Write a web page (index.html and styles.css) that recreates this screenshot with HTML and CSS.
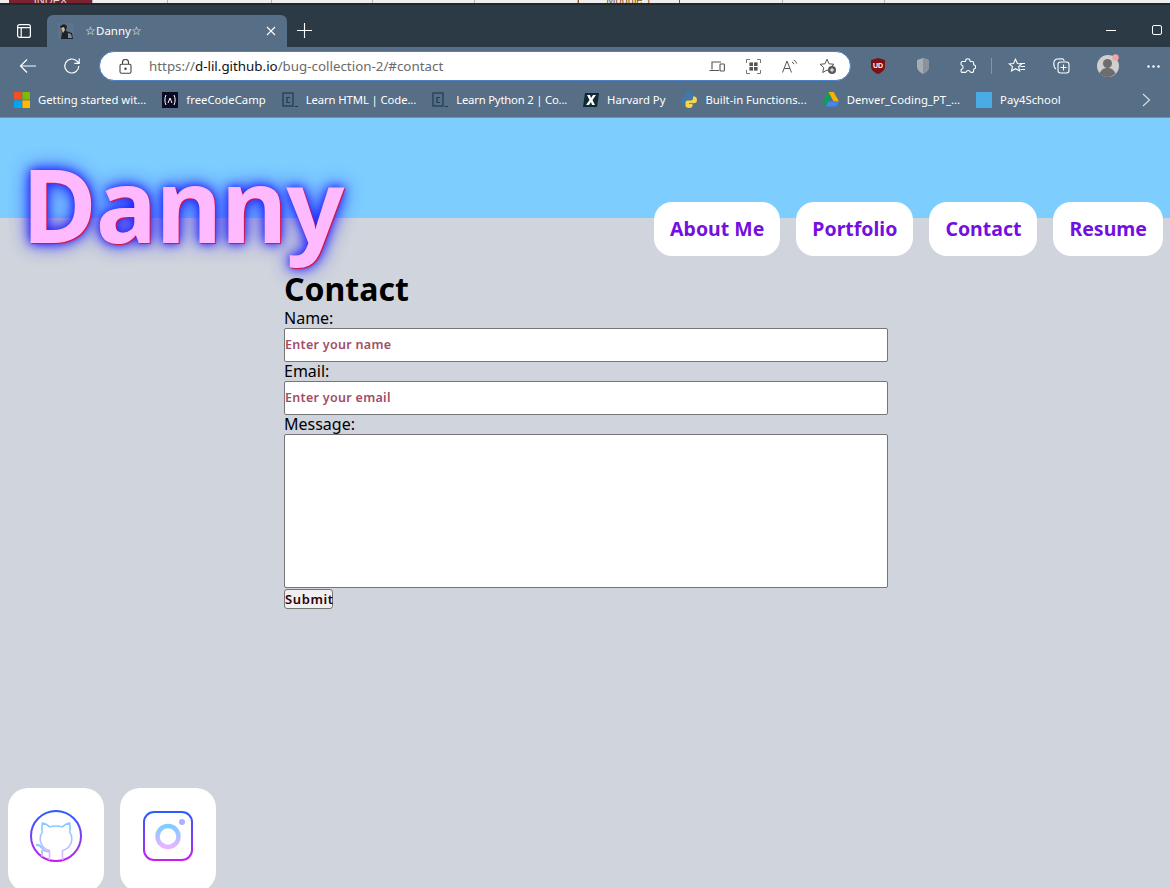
FILE: index.html
```html
<!DOCTYPE html>
<html lang="en">
<head>
  <meta charset="UTF-8">
  <title>☆Danny☆</title>
  <link rel="stylesheet" href="styles.css">
</head>
<body>

  <div class="behind">
    <span class="behind-cell behind-red">INDEX</span>
    <span class="behind-cell w-75"></span>
    <span class="behind-cell w-104"></span>
    <span class="behind-cell w-101"></span>
    <span class="behind-cell w-102"></span>
    <span class="behind-cell w-103"></span>
    <span class="behind-cell w-102 behind-mod">Module 1</span>
    <span class="behind-cell w-103"></span>
    <span class="behind-cell w-102"></span>
  </div>

  <div class="titlebar">
    <svg class="tab-actions" width="16" height="16" viewBox="0 0 16 16" fill="none" stroke="#fff" stroke-width="1.2"><rect x="1.6" y="1.6" width="12.8" height="12.8" rx="2"/><path d="M1.6 4.6h12.8M5.2 4.6v9.8"/></svg>
    <div class="tab">
      <svg class="favicon" width="16" height="16" viewBox="0 0 16 16"><rect x="0" y="0" width="16" height="16" fill="#5a748c"/><path d="M2 3l4-2 3 2-1 5 6 2 1 6H3l1-7z" fill="#1d2226"/><path d="M3 5l3-1 1 3-2 3z" fill="#d9b48f"/><path d="M10 10l3 1 1 4h-4z" fill="#7a8b99"/></svg>
      <span class="tab-title">☆Danny☆</span>
      <svg class="tab-close" width="10" height="10" viewBox="0 0 10 10" stroke="#fff" stroke-width="1.1"><path d="M1 1l8 8M9 1l-8 8"/></svg>
    </div>
    <svg class="new-tab" width="15" height="15" viewBox="0 0 15 15" stroke="#fff" stroke-width="1.1"><path d="M7.5 0v15M0 7.5h15"/></svg>
    <div class="win-btns">
      <span class="win-min"></span>
      <span class="win-max"></span>
    </div>
  </div>

  <div class="toolbar">
    <svg class="tool-back" width="18" height="16" viewBox="0 0 18 16" fill="none" stroke="#fff" stroke-width="1.2"><path d="M17 8H1.5M8 1.5L1.5 8 8 14.5"/></svg>
    <svg class="tool-reload" width="18" height="18" viewBox="0 0 18 18" fill="none" stroke="#fff" stroke-width="1.2"><path d="M15.8 9a7 7 0 1 1-2.2-5.1L16 6.2M16.2 1.4v4.9h-4.9"/></svg>
    <div class="address">
      <svg class="lock" width="13" height="15" viewBox="0 0 13 15" fill="none" stroke="#444" stroke-width="1.1"><rect x="1" y="5.2" width="11" height="9" rx="1.5"/><path d="M3.5 5V3.5a3 3 0 0 1 6 0V5"/><circle cx="6.5" cy="9.8" r=".7" fill="#444"/></svg>
      <span class="url"><span class="url-dim">https://</span>d-lil.github.io<span class="url-dim">/bug-collection-2/#contact</span></span>
      <div class="address-icons">
        <svg width="16" height="13" viewBox="0 0 16 13" fill="none" stroke="#555" stroke-width="1.1"><path d="M12 2H3v7.500M0.500 10.500H10"/><rect x="11" y="4" width="4.400" height="7" rx=".8"/></svg>
        <svg width="15" height="15" viewBox="0 0 15 15" fill="#555"><rect x="3.400" y="3.400" width="3.600" height="3.600"/><rect x="8" y="3.400" width="3.600" height="3.600"/><rect x="3.400" y="8" width="3.600" height="3.600"/><rect x="8" y="8" width="3.600" height="3.600"/><path d="M.5 4V.5H4M11 .5h3.500V4M14.500 11v3.500H11M4 14.500H.5V11" fill="none" stroke="#777"/></svg>
        <svg width="16" height="14" viewBox="0 0 16 14" fill="none" stroke="#555" stroke-width="1"><path d="M.5 13.500L5 2l4.500 11.500M2.200 9.500h5.600M10 3a3.500 3.500 0 0 1 2 2.200M11.800 1a6 6 0 0 1 3 3.600"/></svg>
        <svg width="18" height="17" viewBox="0 0 18 17"><path d="M8 1.200l2 4.600 5 .5-3.800 3.300 1.100 4.900L8 12l-4.300 2.500 1.100-4.900L1 6.300l5-.5z" fill="none" stroke="#555" stroke-width="1"/><circle cx="13" cy="12" r="4" fill="#555"/><path d="M13 9.800v4.400M10.800 12h4.400" stroke="#fff" stroke-width="1"/></svg>
      </div>
    </div>
    <div class="ext-icons">
      <svg class="ext-ublock" width="14" height="16" viewBox="0 0 14 16"><path d="M7 0l7 2v6c0 4-3 6.500-7 8-4-1.500-7-4-7-8V2z" fill="#800f14"/><text x="7" y="10" text-anchor="middle" class="ublock-text">UD</text></svg>
      <svg class="ext-shield" width="12" height="16" viewBox="0 0 12 16"><path d="M6 0l6 2v6.500c0 3.500-2.500 5.500-6 7.500-3.500-2-6-4-6-7.500V2z" fill="#a6adb3"/><path d="M6 0l6 2v6.500c0 3.500-2.500 5.500-6 7.500z" fill="#8b9299"/></svg>
      <svg class="ext-puzzle" width="16" height="16" viewBox="0 0 16 16" fill="none" stroke="#fff" stroke-width="1.100"><path d="M5.600 2.800C5.600 1.500 6.600.7 7.800.7s2.200.8 2.200 2.100c0 .4.300.7.700.7h1.700c.7 0 1.200.5 1.200 1.200v1.600c0 .4.300.7.700.7.900.2 1.300 1 1.300 1.900s-.5 1.700-1.300 1.900c-.4.100-.7.300-.7.700v1.700c0 .7-.5 1.200-1.200 1.200h-1.500c-.4 0-.7-.3-.8-.7-.2-.8-1-1.200-1.900-1.200s-1.600.5-1.800 1.200c-.1.400-.4.700-.8.700H2.300c-.7 0-1.200-.5-1.200-1.200v-1.300c0-.4.300-.7.700-.8.800-.2 1.300-1 1.300-1.900s-.5-1.700-1.300-1.900c-.4-.1-.7-.4-.7-.8V4.700c0-.7.500-1.200 1.200-1.200h2.600c.4 0 .7-.3.700-.7z"/></svg>
      <span class="ext-sep"></span>
      <svg class="ext-favs" width="18" height="16" viewBox="0 0 18 16" fill="none" stroke="#fff" stroke-width="1.100"><path d="M7.500 1.200l1.900 4.300 4.300.4-3.100 2.800 1 4.300-4.100-2.300-4 2.300 1-4.300L1.200 5.900l4.300-.4zM12 5.500h5M12.500 8.500h4.500M12.500 11.500h4.500"/></svg>
      <svg class="ext-coll" width="17" height="16" viewBox="0 0 17 16" fill="none" stroke="#fff" stroke-width="1.100"><path d="M3 11C1.500 10 .8 8 .8 5.500.8 3 2 1.300 4 1l5-.2c1.200 0 2 .8 2.200 2"/><rect x="5" y="4" width="11" height="11" rx="2.500"/><path d="M10.500 6.500v6M7.500 9.500h6"/></svg>
      <svg class="ext-avatar" width="24" height="24" viewBox="0 0 24 24"><circle cx="12" cy="12" r="11" fill="#cfcfcf"/><circle cx="11.500" cy="9.500" r="4.500" fill="#6d6d6d"/><path d="M3.500 19.500c2-4.500 5-5.500 8-5.500s6 1 8 5.500a11 11 0 0 1-16 0z" fill="#6d6d6d"/><circle cx="19.500" cy="3.500" r="3.200" fill="#f4a3a3"/></svg>
      <svg class="ext-more" width="13" height="3" viewBox="0 0 13 3" fill="#fff"><circle cx="1.500" cy="1.500" r="1.200"/><circle cx="6.500" cy="1.500" r="1.200"/><circle cx="11.500" cy="1.500" r="1.200"/></svg>
    </div>
  </div>

  <div class="bookmarks">
    <div class="bookmark">
      <svg width="16" height="16" viewBox="0 0 16 16"><rect width="7.600" height="7.600" fill="#f25022"/><rect x="8.400" width="7.600" height="7.600" fill="#7fba00"/><rect y="8.400" width="7.600" height="7.600" fill="#00a4ef"/><rect x="8.400" y="8.400" width="7.600" height="7.600" fill="#ffb900"/></svg>
      <span>Getting started wit...</span>
    </div>
    <div class="bookmark">
      <svg width="16" height="16" viewBox="0 0 16 16" fill="none"><rect width="16" height="16" fill="#0a0a23"/><path d="M4 3C2.500 6 2.500 10 4 13M12 3c1.500 3 1.500 7 0 10M6 11l2-5 2 5" stroke="#fff"/></svg>
      <span>freeCodeCamp</span>
    </div>
    <div class="bookmark bm-tight-1">
      <svg width="16" height="16" viewBox="0 0 16 16" fill="none" stroke="#1f3a4f" stroke-width="1.200"><rect x="1" y="1" width="10" height="13"/><path d="M8 5.500H5v5h3M12.500 14.500H16"/></svg>
      <span>Learn HTML | Code...</span>
    </div>
    <div class="bookmark bm-tight-2">
      <svg width="16" height="16" viewBox="0 0 16 16" fill="none" stroke="#1f3a4f" stroke-width="1.200"><rect x="1" y="1" width="10" height="13"/><path d="M8 5.500H5v5h3M12.500 14.500H16"/></svg>
      <span>Learn Python 2 | Co...</span>
    </div>
    <div class="bookmark">
      <svg width="16" height="16" viewBox="0 0 16 16"><path d="M2 1h14l-2 14H0z" fill="#0d2b30"/><path d="M4 3h3l1 3 2-3h3L9.500 8 12 13H9L8 10l-2 3H3l3.500-5z" fill="#fff"/></svg>
      <span>Harvard Py</span>
    </div>
    <div class="bookmark">
      <svg width="16" height="16" viewBox="0 0 16 16"><path d="M8 0C5 0 4.500 1 4.500 2.500V4H8v.8H3C1 4.800 0 6 0 8s1 3.500 2.800 3.500H4V9.800C4 8.500 5 7.500 6.300 7.500h3.400c1 0 1.800-.8 1.800-1.800V2.500C11.500 1 10.500 0 8 0z" fill="#3c7ab0"/><path d="M8 16c3 0 3.500-1 3.500-2.500V12H8v-.8h5c2 0 3-1.200 3-3.200s-1-3.500-2.800-3.500H12v1.700c0 1.300-1 2.300-2.300 2.300H6.300c-1 0-1.800.8-1.800 1.800v3.200C4.500 15 5.500 16 8 16z" fill="#f6d44b"/></svg>
      <span>Built-in Functions...</span>
    </div>
    <div class="bookmark">
      <svg width="16" height="15" viewBox="0 0 16 15"><path d="M5.300 0h5.400L16 9.500h-5.300z" fill="#f4b400"/><path d="M5.300 0L0 9.500 2.700 14.500 8 5z" fill="#0f9d58"/><path d="M2.700 14.500h10.600L16 9.500H5.300z" fill="#4285f4"/></svg>
      <span>Denver_Coding_PT_...</span>
    </div>
    <div class="bookmark">
      <span class="bm-square"></span>
      <span>Pay4School</span>
    </div>
    <svg class="bm-next" width="9" height="14" viewBox="0 0 9 14" fill="none" stroke="#d5dce2" stroke-width="1.200"><path d="M1 1l6.500 6L1 13"/></svg>
  </div>

  <div class="page">
    <header class="site-header">
      <h1 class="logo">Danny</h1>
      <nav class="main-nav">
        <a class="nav-link" href="#about">About Me</a>
        <a class="nav-link" href="#portfolio">Portfolio</a>
        <a class="nav-link" href="#contact">Contact</a>
        <a class="nav-link" href="#resume">Resume</a>
      </nav>
    </header>

    <section class="contact">
      <h2>Contact</h2>
      <form>
        <label for="name">Name:</label>
        <input type="text" id="name" placeholder="Enter your name">
        <label for="email">Email:</label>
        <input type="text" id="email" placeholder="Enter your email">
        <label for="message">Message:</label>
        <textarea id="message"></textarea>
        <button type="button">Submit</button>
      </form>
    </section>

    <footer class="socials">
      <a class="social" href="#github">
        <svg width="54" height="54" viewBox="0 0 54 54" fill="none">
          <defs>
            <linearGradient id="outerA" x1="0" y1="0" x2="0" y2="1"><stop offset="0" stop-color="#2a5cff"/><stop offset="1" stop-color="#c61ff0"/></linearGradient>
            <linearGradient id="innerA" x1="0" y1="0" x2="0" y2="1"><stop offset="0" stop-color="#7dcdff"/><stop offset="1" stop-color="#e9b4ff"/></linearGradient>
          </defs>
          <circle cx="27" cy="27" r="25" stroke="url(#outerA)" stroke-width="2"/>
          <path d="M20.500 51V41.500c-1.500-.5-3.500-1.200-5-2.500-3-2.500-4.300-6-4.300-9.500 0-2.500.7-4.700 2.100-6.300-.6-2-.6-6 .2-9.200 2.500.4 5.300 2 7.200 3.800 3.800-1 8.800-1 12.600 0 1.900-1.800 4.700-3.400 7.200-3.800.8 3.200.8 7.200.2 9.200 1.400 1.600 2.100 3.800 2.100 6.300 0 3.500-1.300 7-4.300 9.500-1.500 1.300-3.500 2-5 2.500V51" stroke="url(#innerA)" stroke-width="1.600"/>
          <path d="M7 36c3-.5 5 1 6.500 3.500 1.500 2.300 3.800 3.300 7 3M13 41v6.500" stroke="url(#innerA)" stroke-width="2"/>
        </svg>
      </a>
      <a class="social" href="#instagram">
        <svg width="52" height="52" viewBox="0 0 52 52" fill="none">
          <defs>
            <linearGradient id="outerB" x1="0" y1="0" x2="0" y2="1"><stop offset="0" stop-color="#2a5cff"/><stop offset="1" stop-color="#c61ff0"/></linearGradient>
            <linearGradient id="innerB" x1="0" y1="0" x2="0" y2="1"><stop offset="0" stop-color="#7dcdff"/><stop offset="1" stop-color="#e9b4ff"/></linearGradient>
          </defs>
          <rect x="2" y="2" width="48" height="48" rx="10" stroke="url(#outerB)" stroke-width="2"/>
          <circle cx="26" cy="26.500" r="10.500" stroke="url(#innerB)" stroke-width="4.500"/>
          <circle cx="40" cy="12" r="3" fill="#a9b4ff"/>
        </svg>
      </a>
    </footer>
  </div>

</body>
</html>
```

FILE: styles.css
```css
html, body {
  margin: 0;
  padding: 0;
  height: 100%;
  overflow: hidden;
}

body {
  display: flex;
  flex-direction: column;
  font-family: "Noto Sans", sans-serif;
  background-color: #d0d4dc;
}

svg {
  display: block;
  flex-shrink: 0;
}

/* window behind the browser */
.behind {
  height: 3px;
  display: flex;
  background-color: #eeeeee;
  overflow: hidden;
  border-bottom: 2px solid #20282f;
  padding-left: 9px;
  flex-shrink: 0;
}

.behind-cell {
  display: block;
  border-right: 1px solid #b5b5b5;
  font: 11px/1px "Liberation Sans", sans-serif;
  box-sizing: border-box;
}

.behind-red {
  width: 84px;
  background-color: #7a2230;
  color: #ddd;
  text-align: center;
}

.behind-mod {
  color: #8a5a20;
  text-align: center;
  border-left: 1px solid #8a5a20;
  border-right-color: #8a5a20;
}

.w-75 { width: 75px; }
.w-101 { width: 101px; }
.w-102 { width: 102px; }
.w-103 { width: 103px; }
.w-104 { width: 104px; }

/* browser chrome */
.titlebar {
  height: 42px;
  display: flex;
  align-items: flex-end;
  background-color: #2c3a46;
  flex-shrink: 0;
}

.tab-actions {
  margin: 0 0 8px 16px;
}

.tab {
  width: 240px;
  height: 32px;
  margin-left: 15px;
  display: flex;
  align-items: center;
  background-color: #566e86;
  border-radius: 6px 6px 0 0;
  box-sizing: border-box;
  padding: 0 11px 1px 11px;
  color: #fff;
  font: 11.500px "Noto Sans", sans-serif;
}

.tab-title {
  margin-left: 11px;
  flex: 1;
}

.new-tab {
  margin: 0 0 9px 10px;
}

.win-btns {
  margin: 0 8px 11px auto;
  display: flex;
  align-items: center;
  gap: 36px;
  height: 12px;
}

.win-min {
  width: 10px;
  height: 1px;
  background-color: #fff;
}

.win-max {
  width: 8px;
  height: 8px;
  border: 1px solid #fff;
  border-radius: 2px;
  flex-shrink: 0;
}

.toolbar {
  height: 38px;
  display: flex;
  align-items: center;
  background-color: #566e86;
  flex-shrink: 0;
}

.tool-back {
  margin-left: 19px;
}

.tool-reload {
  margin-left: 26px;
}

.address {
  width: 752px;
  height: 30px;
  margin-left: 18px;
  display: flex;
  align-items: center;
  box-sizing: border-box;
  background-color: #fff;
  border: 1px solid #4c7fc4;
  border-radius: 15px;
  padding: 0 13px 0 19px;
  font: 13.350px "Noto Sans", sans-serif;
}

.url {
  margin-left: 17px;
  color: #111;
}

.url-dim {
  color: #6b6b6b;
}

.address-icons {
  margin-left: auto;
  display: flex;
  align-items: center;
  gap: 21px;
}

.ext-icons {
  flex: 1;
  display: flex;
  align-items: center;
  padding-left: 20px;
}

.ext-shield { margin-left: 32px; }
.ext-puzzle { margin-left: 31px; }

.ext-sep {
  width: 1px;
  height: 16px;
  background-color: #8296a8;
  margin-left: 15px;
}

.ext-favs { margin-left: 16px; }
.ext-coll { margin-left: 27px; }
.ext-avatar { margin-left: 26px; }
.ext-more { margin-left: 27px; }

.bookmarks {
  height: 33px;
  box-sizing: border-box;
  border-bottom: 1px solid #7c8fa1;
  padding: 0 0 3px 14px;
  display: flex;
  align-items: center;
  gap: 16px;
  background-color: #566e86;
  color: #fff;
  font: 11.300px "Noto Sans", sans-serif;
  flex-shrink: 0;
}

.bookmark {
  display: flex;
  align-items: center;
  gap: 8px;
  white-space: nowrap;
}

.bm-tight-1 { letter-spacing: -.1px; }
.bm-tight-2 { letter-spacing: -.2px; }

.bm-square {
  width: 16px;
  height: 16px;
  background-color: #4aace4;
}

.bm-next {
  margin-left: auto;
  margin-right: 19px;
}

/* the page */
.page {
  flex: 1;
  display: flex;
  flex-direction: column;
  min-height: 0;
}

.site-header {
  height: 100px;
  display: flex;
  justify-content: space-between;
  align-items: flex-start;
  background-color: #7dcdff;
  flex-shrink: 0;
  padding: 0 7px 0 22px;
}

.logo {
  margin: 30px 0 0;
  font-size: 102px;
  line-height: 112px;
  font-weight: 700;
  color: #ffbaff;
  letter-spacing: -1px;
  text-shadow: 1px 1px 1px #e0103a, 0 0 10px #1a1aff, 0 0 20px #1a1aff;
}

.main-nav {
  display: flex;
  gap: 16px;
  margin-top: 84px;
}

.nav-link {
  height: 54px;
  line-height: 54px;
  padding: 0 16px;
  background-color: #fff;
  border-radius: 18px;
  color: #7310df;
  font-size: 19.500px;
  font-weight: 700;
  text-decoration: none;
}

.contact {
  margin: 53px 0 0 284px;
  width: 604px;
  color: #000;
  font-size: 16px;
}

.contact h2 {
  margin: 0 0 2px;
  font-size: 32px;
  line-height: 36px;
  font-weight: 700;
}

form {
  display: flex;
  flex-direction: column;
  align-items: flex-start;
}

label {
  line-height: 19px;
  height: 19px;
}

input, textarea {
  width: 100%;
  box-sizing: border-box;
  margin: 0;
  border: 1px solid #767676;
  border-radius: 2px;
  background-color: #fff;
  padding: 0 1px;
  font: 12.500px "Noto Sans", sans-serif;
}

input {
  height: 34px;
  padding: 0 0 2px;
}

input::placeholder {
  color: #a14d66;
  opacity: 1;
  font-weight: 600;
  letter-spacing: .3px;
}

textarea {
  height: 154px;
  resize: none;
  display: block;
}

button {
  margin-top: 1px;
  height: 20px;
  width: 49px;
  padding: 0 0 2px;
  border: 1px solid #767676;
  border-radius: 3px;
  background-color: #efefef;
  color: #30000a;
  font: 600 13px "Noto Sans", sans-serif;
  letter-spacing: .6px;
}

.socials {
  margin-top: auto;
  margin-bottom: -4px;
  display: flex;
  gap: 16px;
  padding-left: 8px;
}

.social {
  width: 96px;
  height: 104px;
  box-sizing: border-box;
  padding-bottom: 8px;
  background-color: #fff;
  border-radius: 20px;
  display: flex;
  align-items: center;
  justify-content: center;
}

.ublock-text {
  font: bold 7px "Liberation Sans", sans-serif;
  fill: #fff;
}
```
